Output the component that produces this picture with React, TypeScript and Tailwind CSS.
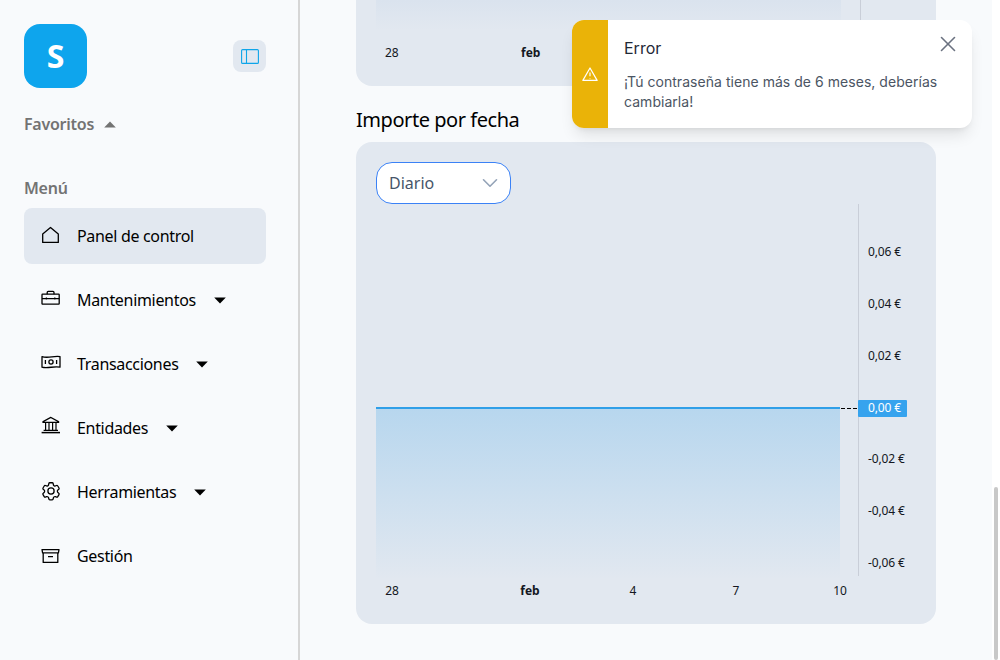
import React from 'react';
import { ChevronDown, X } from 'lucide-react';

const uiFont = '[font-family:"Noto_Sans",sans-serif]';

function HomeIcon() {
  return (
    <svg viewBox="0 0 20 20" fill="none" stroke="currentColor" strokeWidth="1.3" className="w-5 h-5">
      <path d="M1.7 16.4V8L9.5 1.4 17.3 8v8.4z" strokeLinejoin="round" />
    </svg>
  );
}

function BriefcaseIcon() {
  return (
    <svg viewBox="0 0 20 20" fill="none" stroke="currentColor" strokeWidth="1.3" className="w-5 h-5">
      <rect x="1" y="4.2" width="17.2" height="10" rx="0.6" />
      <path d="M6.2 4.2V2.4a1 1 0 0 1 1-1h4.8a1 1 0 0 1 1 1v1.8M1 8.6h17.2M5.4 7.6v2M13.8 7.6v2" />
    </svg>
  );
}

function BanknoteIcon() {
  return (
    <svg viewBox="0 0 20 20" fill="none" stroke="currentColor" strokeWidth="1.3" className="w-5 h-5">
      <path d="M1 2.6c6 2.2 12-1.2 18 0v10.6c-6-1.6-12 1.8-18 0z" strokeLinejoin="round" />
      <circle cx="10" cy="8" r="2.1" />
      <path d="M4.4 6v4M15.6 6v4" />
    </svg>
  );
}

function BankIcon() {
  return (
    <svg viewBox="0 0 20 20" fill="none" stroke="currentColor" strokeWidth="1.2" className="w-5 h-5 overflow-visible">
      <path d="M9.8 -0.6 2 3.6v.8h15.6v-.8zM4.6 4.6v7.6M8 4.6v7.6M11.6 4.6v7.6M15 4.6v7.6M2.6 12.4h14.4" />
      <path d="M0.6 14.6h18.4" strokeWidth="1.5" />
    </svg>
  );
}

function GearIcon() {
  return (
    <svg viewBox="0 0 24 24" fill="none" stroke="currentColor" strokeWidth="1.4" className="w-[22px] h-[22px] -ml-px -mt-[2px]">
      <path
        strokeLinejoin="round"
        d="M9.6 3.9c.1-.5.5-.9 1.1-.9h2.6c.5 0 1 .4 1.1.9l.2 1.3c.1.4.3.7.6.9l.5.3c.3.2.7.2 1.1.1l1.3-.5c.5-.2 1.1 0 1.3.5l1.3 2.2c.3.5.2 1.1-.2 1.4l-1 .9c-.3.2-.5.6-.5 1v.6c0 .4.2.8.5 1l1 .9c.4.3.5.9.2 1.4l-1.3 2.2c-.3.5-.8.7-1.3.5l-1.3-.5c-.4-.1-.8-.1-1.1.1l-.5.3c-.3.2-.5.5-.6.9l-.2 1.3c-.1.5-.6.9-1.1.9h-2.6c-.6 0-1-.4-1.1-.9l-.2-1.3c-.1-.4-.3-.7-.6-.9l-.5-.3c-.3-.2-.7-.2-1.1-.1l-1.3.5c-.5.2-1 0-1.3-.5l-1.3-2.2c-.3-.5-.2-1.1.2-1.4l1-.9c.3-.2.5-.6.5-1v-.6c0-.4-.2-.8-.5-1l-1-.9c-.4-.3-.5-.9-.2-1.4l1.3-2.2c.3-.5.8-.7 1.3-.5l1.3.5c.4.1.8.1 1.1-.1l.5-.3c.3-.2.5-.5.6-.9z"
      />
      <circle cx="12" cy="12" r="3.4" />
    </svg>
  );
}

function ArchiveIcon() {
  return (
    <svg viewBox="0 0 20 20" fill="none" stroke="currentColor" strokeWidth="1.3" className="w-5 h-5">
      <path d="M1 3.6h17l-.6 3.2H1.6zM2.2 6.8v9.6h14.6V6.8M7 10.6h5" strokeLinejoin="round" />
    </svg>
  );
}

function Caret({ up, className }: { up?: boolean; className: string }) {
  return (
    <svg viewBox="0 0 12 7" className={className} fill="currentColor">
      <path d={up ? 'M6 0.5 11.8 6.5H0.2z' : 'M6 6.5 0.2 0.5H11.8z'} />
    </svg>
  );
}

function NavItem({ icon, label, hasCaret, active }: { icon: React.ReactNode; label: string; hasCaret?: boolean; active?: boolean }) {
  return (
    <div className={`flex items-center h-14 pl-[17px] rounded-lg text-black ${active ? 'bg-[#e2e8f0]' : ''}`}>
      <span className="w-5 h-5 text-black">{icon}</span>
      <span className="ml-[16px] text-base tracking-[-0.32px]">{label}</span>
      {hasCaret && <Caret className="ml-[18px] w-3 h-[7px]" />}
    </div>
  );
}

function Sidebar() {
  return (
    <aside className={`w-[300px] shrink-0 h-full border-r-2 border-[#d6d6d6] pl-6 pr-8 pt-6 ${uiFont}`}>
      <div className="flex items-center justify-between">
        <div className="w-[63px] h-16 rounded-2xl bg-[#0ea5ed] flex items-center justify-center text-white text-[32px] font-bold">S</div>
        <div className="w-[33px] h-8 rounded-lg bg-[#e2e8f0] flex items-center justify-center text-[#0ea5e9]">
          <svg viewBox="0 0 18 15" fill="none" stroke="currentColor" strokeWidth="1.1" className="w-[18px] h-[15px]">
            <rect x="0.6" y="0.6" width="16.8" height="13.8" rx="1" />
            <path d="M5.5 0.6v13.8" />
          </svg>
        </div>
      </div>
      <div className="mt-[24px] flex items-center font-semibold text-[#737373] text-base leading-6 tracking-[-0.25px]">
        Favoritos
        <Caret up className="ml-[10px] w-3 h-[7px]" />
      </div>
      <div className="mt-10 font-semibold text-[#737373] text-base leading-6 tracking-[-0.25px]">Menú</div>
      <nav className="mt-2 flex flex-col gap-2">
        <NavItem icon={<HomeIcon />} label="Panel de control" active />
        <NavItem icon={<BriefcaseIcon />} label="Mantenimientos" hasCaret />
        <NavItem icon={<BanknoteIcon />} label="Transacciones" hasCaret />
        <NavItem icon={<BankIcon />} label="Entidades" hasCaret />
        <NavItem icon={<GearIcon />} label="Herramientas" hasCaret />
        <NavItem icon={<ArchiveIcon />} label="Gestión" />
      </nav>
    </aside>
  );
}

const yLabels = [
  { y: 252, t: '0,06 €' },
  { y: 304, t: '0,04 €' },
  { y: 356, t: '0,02 €' },
  { y: 459, t: '-0,02 €' },
  { y: 511, t: '-0,04 €' },
  { y: 563, t: '-0,06 €' },
];

// chart is drawn in page coordinates, viewBox starts below the select
function Chart() {
  return (
    <svg width="580" height="440" viewBox="356 184 580 440" className="block" style={{ fontFamily: '"Noto Sans", sans-serif' }}>
      <defs>
        <linearGradient id="area" x1="0" y1="0" x2="0" y2="1">
          <stop offset="0" stopColor="#2f9fe8" stopOpacity="0.24" />
          <stop offset="1" stopColor="#2f9fe8" stopOpacity="0" />
        </linearGradient>
      </defs>
      <rect x="376" y="408" width="464" height="172" fill="url(#area)" />
      <path d="M376 408H840" stroke="#2f9fe8" strokeWidth="2" />
      <path d="M841 408.5H857" stroke="#000" strokeWidth="1" strokeDasharray="4 2" />
      <path d="M858.5 204V576" stroke="#c9ced8" strokeWidth="1" />
      {yLabels.map(l => (
        <text key={l.t} x="868" y={l.y + 4} fontSize="12" letterSpacing="-0.15" fill="#131722">{l.t}</text>
      ))}
      <rect x="858" y="400" width="49" height="17" rx="1" fill="#36a3ee" />
      <text x="868" y="412" fontSize="12" letterSpacing="-0.15" fill="#fff">0,00 €</text>
      <text x="392" y="595" fontSize="12" fill="#131722" textAnchor="middle">28</text>
      <text x="530" y="595" fontSize="12" fontWeight="700" fill="#131722" textAnchor="middle">feb</text>
      <text x="633" y="595" fontSize="12" fill="#131722" textAnchor="middle">4</text>
      <text x="736" y="595" fontSize="12" fill="#131722" textAnchor="middle">7</text>
      <text x="840" y="595" fontSize="12" fill="#131722" textAnchor="middle">10</text>
    </svg>
  );
}

function TopChartRemainder() {
  return (
    <div className={`relative h-[86px] w-[580px] rounded-b-2xl bg-[#e2e8f0] ${uiFont} text-xs text-[#131722]`}>
      <div className="h-[30px] ml-5 w-[465px] bg-gradient-to-b from-[#dae3ee] to-[#e2e8f0]" />
      <div className="w-px bg-[#c9ced8] absolute left-[504px] top-0 h-[46px]" />
      <div className="absolute top-[45px] left-[29px]">28</div>
      <div className="absolute top-[45px] left-[165px] font-bold">feb</div>
    </div>
  );
}

function Toast() {
  return (
    <div className="absolute left-[572px] top-5 w-[400px] h-[108px] rounded-xl bg-white shadow-lg flex overflow-hidden font-['Inter',sans-serif]">
      <div className="w-9 shrink-0 bg-[#eab308] flex items-center justify-center text-white">
        <svg viewBox="0 0 24 24" fill="none" stroke="currentColor" strokeWidth="1.6" className="w-[18px] h-[18px]">
          <path d="M12 4 2.5 20.5h19z" strokeLinejoin="round" />
          <path d="M12 10v5M12 17.3v.7" />
        </svg>
      </div>
      <div className="flex-1 pl-4 pr-4 pt-4 relative">
        <div className="text-base leading-6 text-[#1f2937]">Error</div>
        <div className="mt-[12px] text-sm leading-5 tracking-[0.04px] text-[#4b5563]">¡Tú contraseña tiene más de 6 meses, deberías cambiarla!</div>
        <X className="absolute right-[11px] top-[11px] w-[26px] h-[26px] text-[#6b7280]" strokeWidth={1.5} />
      </div>
    </div>
  );
}

export default function App() {
  return (
    <div className="relative w-[1000px] h-[660px] overflow-hidden bg-white">
      <div className="w-[992px] h-full flex bg-[#f8fafc]">
        <Sidebar />
        <main className="flex-1 pl-14">
          <TopChartRemainder />
          <h2 className={`mt-5 text-xl leading-7 text-black tracking-[-0.45px] ${uiFont}`}>Importe por fecha</h2>
          <section className="mt-2 w-[580px] h-[482px] rounded-2xl bg-[#e2e8f0] relative">
            <div className="h-[42px] pt-5 box-content">
              <div className={`ml-5 w-[135px] h-[42px] rounded-2xl border border-[#3b82f6] bg-white flex items-center justify-between pl-3 pr-[7px] text-base text-[#475569] ${uiFont}`}>
                Diario
                <ChevronDown className="w-[26px] h-[26px] text-[#94a3b8]" strokeWidth={1.5} />
              </div>
            </div>
            <div className="-mt-5">
              <Chart />
            </div>
          </section>
        </main>
      </div>
      <div className="absolute right-[2px] top-[487px] w-[4px] h-[173px] rounded-sm bg-[#c8c8c8]" />
      <Toast />
    </div>
  );
}
